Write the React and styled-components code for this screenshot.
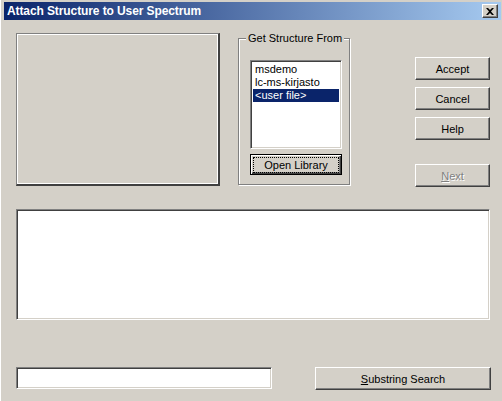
import React from 'react'
import styled, { createGlobalStyle } from 'styled-components'

const Global = createGlobalStyle`
  html, body { margin: 0; padding: 0; background: #d4d0c8; }
  body { font-family: "Liberation Sans", Arial, sans-serif; font-size: 11px; color: #000; }
  * { box-sizing: border-box; }
`

const Window = styled.div`
  width: 502px;
  height: 401px;
  background: #d4d0c8;
  padding: 2px 1px 0 3px;
  border-left: 1px solid #fff;
  display: flex;
  flex-direction: column;
  overflow: hidden;
`

const TitleBar = styled.div`
  height: 18px;
  background: linear-gradient(to right, #0a246a, #a6caf0);
  display: flex;
  align-items: center;
  justify-content: space-between;
  padding: 0 3px 0 3px;
`

const Title = styled.span`
  color: #fff;
  font-weight: bold;
  font-size: 12px;
  letter-spacing: -0.1px;
`

const CloseButton = styled.div`
  width: 16px;
  height: 14px;
  background: #d4d0c8;
  border-top: 1px solid #fff;
  border-left: 1px solid #fff;
  border-right: 1px solid #404040;
  border-bottom: 1px solid #404040;
  box-shadow: inset -1px -1px 0 #808080;
  display: flex;
  align-items: center;
  justify-content: center;
`

const Body = styled.div`
  flex: 1;
  display: flex;
  flex-direction: column;
  padding: 13px 0 0 12px;
`

const TopRow = styled.div`
  display: flex;
  align-items: flex-start;
`

const PictureBox = styled.div`
  width: 204px;
  height: 153px;
  border-top: 1px solid #808080;
  border-left: 1px solid #808080;
  border-right: 2px solid #404040;
  border-bottom: 2px solid #404040;
  box-shadow: inset 0 0 0 1px #fff;
`

const GroupBox = styled.div`
  position: relative;
  margin: 5px 0 0 18px;
  width: 112px;
  height: 147px;
  padding: 21px 6px 0 11px;
  border: 1px solid #808080;
  box-shadow: 1px 1px 0 #fff, inset 1px 1px 0 #fff;
  display: flex;
  flex-direction: column;
`

const GroupLabel = styled.span`
  position: absolute;
  top: -7px;
  left: 7px;
  padding: 0 2px;
  background: #d4d0c8;
  white-space: nowrap;
  line-height: 13px;
`

const ListBox = styled.div`
  width: 92px;
  height: 89px;
  background: #fff;
  border-top: 1px solid #808080;
  border-left: 1px solid #808080;
  border-right: 1px solid #fff;
  border-bottom: 1px solid #fff;
  box-shadow: inset 1px 1px 0 #404040, inset -1px -1px 0 #d4d0c8;
  padding: 2px 2px;
  display: flex;
  flex-direction: column;
`

const ListItem = styled.div`
  height: 13px;
  line-height: 13px;
  padding-left: 2px;
  white-space: nowrap;
  background: ${p => (p.selected ? '#0a246a' : 'transparent')};
  color: ${p => (p.selected ? '#fff' : '#000')};
`

const Button = styled.div`
  width: ${p => p.w || 75}px;
  height: ${p => p.h || 23}px;
  background: #d4d0c8;
  border-top: 1px solid #fff;
  border-left: 1px solid #fff;
  border-right: 1px solid #404040;
  border-bottom: 1px solid #404040;
  box-shadow: inset -1px -1px 0 #808080;
  display: flex;
  align-items: center;
  justify-content: center;
  color: ${p => (p.disabled ? '#808080' : '#000')};
  text-shadow: ${p => (p.disabled ? '1px 1px 0 #fff' : 'none')};
  flex-shrink: 0;
`

const DefaultButton = styled(Button)`
  margin-top: 5px;
  border: 1px solid #000;
  box-shadow: inset 1px 1px 0 #fff, inset -1px -1px 0 #404040, inset -2px -2px 0 #808080;
`

const FocusLabel = styled.span`
  outline: 1px dotted #000;
  width: 84px;
  height: 14px;
  display: flex;
  align-items: center;
  justify-content: center;
`

const ButtonColumn = styled.div`
  margin-left: 65px;
  margin-top: 24px;
  display: flex;
  flex-direction: column;
  gap: 7px;
`

const Spacer = styled.div`
  height: ${p => p.h}px;
`

const Sunken = styled.div`
  background: #fff;
  border-top: 1px solid #808080;
  border-left: 1px solid #808080;
  border-right: 1px solid #fff;
  border-bottom: 1px solid #fff;
  box-shadow: inset 1px 1px 0 #404040, inset -1px -1px 0 #d4d0c8;
`

const TextArea = styled(Sunken)`
  margin-top: 22px;
  width: 474px;
  height: 111px;
`

const BottomRow = styled.div`
  margin-top: 47px;
  display: flex;
  align-items: flex-start;
`

const TextInput = styled(Sunken)`
  width: 256px;
  height: 22px;
`

const SearchButton = styled(Button)`
  margin-left: 43px;
`

const U = styled.span`
  text-decoration: underline;
`

export default function App() {
  return (
    <>
      <Global />
      <Window>
        <TitleBar>
          <Title>Attach Structure to User Spectrum</Title>
          <CloseButton>
            <svg width="8" height="7" viewBox="0 0 8 7">
              <path d="M0 0h2l2 2 2-2h2L5 3.5 8 7H6L4 5 2 7H0l3-3.5z" fill="#000" />
            </svg>
          </CloseButton>
        </TitleBar>
        <Body>
          <TopRow>
            <PictureBox />
            <GroupBox>
              <GroupLabel>Get Structure From</GroupLabel>
              <ListBox>
                <ListItem>msdemo</ListItem>
                <ListItem>lc-ms-kirjasto</ListItem>
                <ListItem selected>&lt;user file&gt;</ListItem>
              </ListBox>
              <DefaultButton w={92} h={21}>
                <FocusLabel>Open Library</FocusLabel>
              </DefaultButton>
            </GroupBox>
            <ButtonColumn>
              <Button>Accept</Button>
              <Button>Cancel</Button>
              <Button>Help</Button>
              <Spacer h={10} />
              <Button disabled>
                <U>N</U>ext
              </Button>
            </ButtonColumn>
          </TopRow>
          <TextArea />
          <BottomRow>
            <TextInput />
            <SearchButton w={176}>
              <U>S</U>ubstring Search
            </SearchButton>
          </BottomRow>
        </Body>
      </Window>
    </>
  )
}
